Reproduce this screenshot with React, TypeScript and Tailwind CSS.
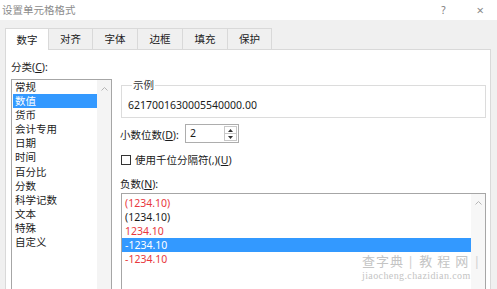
import React from "react";

const categories = ["常规", "数值", "货币", "会计专用", "日期", "时间", "百分比", "分数", "科学记数", "文本", "特殊", "自定义"];

const negatives = [
  { text: "(1234.10)", red: true },
  { text: "(1234.10)", red: false },
  { text: "1234.10", red: true },
  { text: "-1234.10", red: false, selected: true },
  { text: "-1234.10", red: true },
];

const tabs = [
  { label: "数字", w: "w-[44px]" },
  { label: "对齐", w: "w-[44px]" },
  { label: "字体", w: "w-[45px]" },
  { label: "边框", w: "w-[45px]" },
  { label: "填充", w: "w-[45px]" },
  { label: "保护", w: "w-[44px]" },
];

function ChevronUp() {
  return (
    <svg width="7" height="5" viewBox="0 0 7 5" className="block">
      <path d="M0.5 4.5L3.5 1.5L6.5 4.5" fill="none" stroke="#b5b5b5" strokeWidth="1" />
    </svg>
  );
}

export default function App() {
  return (
    <div className="w-[497px] h-[289px] overflow-hidden bg-[#f0f0f0] flex flex-col relative font-['Noto_Sans','Noto_Sans_CJK_SC',sans-serif] text-[10.5px] text-[#1b1b1b]">
      {/* title bar */}
      <div className="h-[20px] bg-white flex items-center shrink-0">
        <span className="pl-[2px] text-[#8c8c8c] leading-[14px]">设置单元格格式</span>
        <span className="ml-auto text-[#7a7a7a] text-[10px]">?</span>
        <span className="ml-[31px] mr-[13px] text-[#8a8a8a] text-[13px] leading-none">×</span>
      </div>

      <div className="pl-[5px] pt-[8px] flex flex-col">
        {/* tabs */}
        <div className="flex h-[21px]">
          {tabs.map((t, i) =>
            i === 0 ? (
              <div
                key={t.label}
                className={`${t.w} h-[22px] bg-white border border-b-0 border-[#d9d9d9] flex items-center justify-center z-10 leading-[14px]`}
              >
                {t.label}
              </div>
            ) : (
              <div
                key={t.label}
                className={`${t.w} h-[21px] border border-l-0 border-b-0 border-[#d9d9d9] flex items-center justify-center leading-[14px]`}
              >
                {t.label}
              </div>
            )
          )}
        </div>

        {/* panel */}
        <div className="w-[486px] h-[260px] bg-white border border-[#d9d9d9] flex pl-[5px] pt-[10px]">
          {/* left column */}
          <div className="w-[101px] flex flex-col">
            <div className="leading-[14px] h-[14px]">
              分类(<u>C</u>):
            </div>
            <div className="mt-[5px] h-[230px] border border-[#a6a6a6] flex">
              <div className="w-[85px] pl-px">
                {categories.map((c, i) => (
                  <div
                    key={c}
                    className={`h-[14.1px] leading-[14px] pl-[2px] ${i === 1 ? "bg-[#3399ff] text-white" : ""}`}
                  >
                    {c}
                  </div>
                ))}
              </div>
              <div className="w-[14px] bg-[#f4f4f4] flex justify-center pt-[6px]">
                <ChevronUp />
              </div>
            </div>
          </div>

          {/* right column */}
          <div className="ml-[8px] w-[366px] flex flex-col mt-[18px]">
            <fieldset className="border border-[#dcdcdc] ml-px pl-[6px] pb-[5px]">
              <legend className="ml-[4px] px-px leading-[14px] text-[#333]">示例</legend>
              <div className="pt-[6px] leading-[14px]">6217001630005540000.00</div>
            </fieldset>

            <div className="mt-[6px] flex items-center h-[19px]">
              <span className="w-[65px] leading-[14px] pt-[3px]">
                小数位数(<u>D</u>):
              </span>
              <div className="w-[54px] h-[19px] border border-[#adadad] flex">
                <span className="flex-1 pl-[4px] leading-[17px]">2</span>
                <div className="w-[13px] my-px mr-px border border-[#c8c8c8] flex flex-col">
                  <div className="flex-1 flex items-center justify-center border-b border-[#c8c8c8]">
                    <svg width="5" height="3" viewBox="0 0 5 3"><path d="M0 3L2.5 0L5 3Z" fill="#333" /></svg>
                  </div>
                  <div className="flex-1 flex items-center justify-center">
                    <svg width="5" height="3" viewBox="0 0 5 3"><path d="M0 0L2.5 3L5 0Z" fill="#333" /></svg>
                  </div>
                </div>
              </div>
            </div>

            <div className="mt-[10px] flex items-center h-[14px]">
              <span className="ml-px w-[10px] h-[10px] border border-[#333] bg-white" />
              <span className="ml-[4px] leading-[14px]">
                使用千位分隔符(,)(<u>U</u>)
              </span>
            </div>

            <div className="mt-[10px] leading-[14px] h-[14px]">
              负数(<u>N</u>):
            </div>

            <div className="mt-[2px] ml-px w-[365px] h-[120px] border border-[#a6a6a6] flex">
              <div className="w-[349px] pt-[2px]">
                {negatives.map((n, i) => (
                  <div
                    key={i}
                    className={`h-[14px] leading-[14px] pl-[3px] ${
                      n.selected ? "bg-[#3399ff] text-white" : n.red ? "text-[#e8383d]" : "text-[#1b1b1b]"
                    }`}
                  >
                    {n.text}
                  </div>
                ))}
              </div>
              <div className="w-[14px] bg-[#f7f7f7] flex justify-center pt-[6px]">
                <ChevronUp />
              </div>
            </div>
          </div>
        </div>
      </div>

      {/* watermark */}
      <div className="absolute left-[362px] top-[253px] flex flex-col items-start text-[#c4c4c4] pointer-events-none whitespace-nowrap">
        <div className="flex items-center text-[13px] leading-[17px] whitespace-nowrap">
          <span className="tracking-[1px]">查字典</span>
          <span className="ml-[3px] text-[#d0d0d0]">|</span>
          <span className="tracking-[5px] ml-[5px]">教程网</span>
          <span className="text-[#d0d0d0]">|</span>
        </div>
        <div className="font-['Liberation_Serif',serif] text-[10px] leading-[11px] tracking-[0.4px] whitespace-nowrap">jiaocheng.chazidian.com</div>
      </div>
    </div>
  );
}
